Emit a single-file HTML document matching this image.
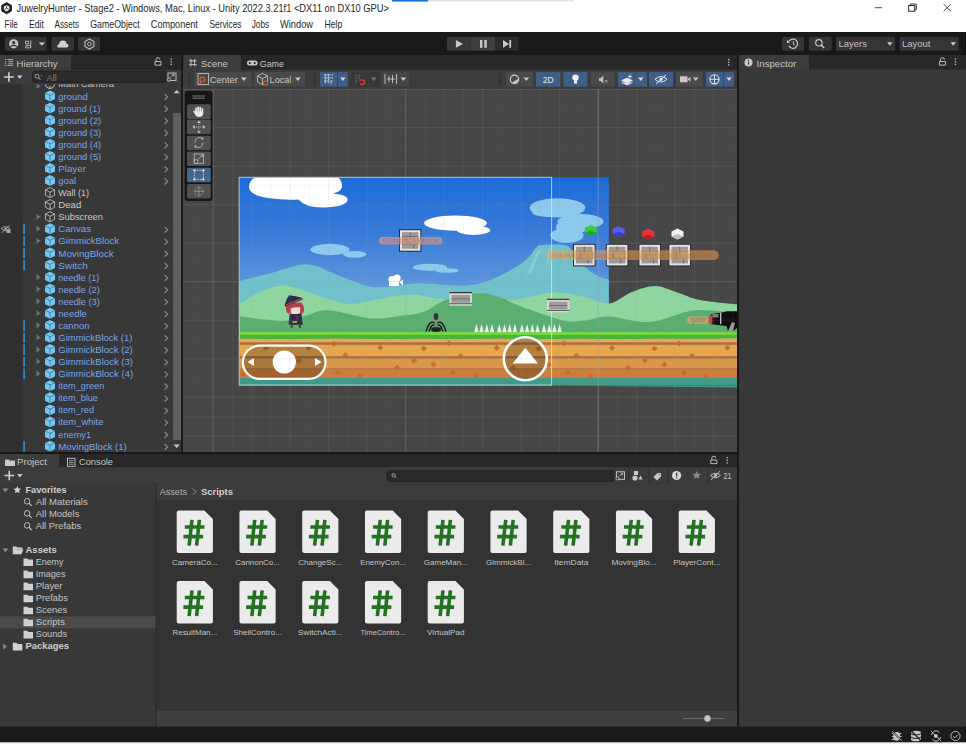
<!DOCTYPE html><html><head><meta charset="utf-8"><style>html,body{margin:0;padding:0;background:#383838;overflow:hidden}svg{display:block;font-family:"Liberation Sans",sans-serif}</style></head><body><svg width="966" height="744" viewBox="0 0 966 744">
<rect x="0" y="0" width="966" height="744" fill="#383838" />
<rect x="0" y="0" width="966" height="32" fill="#ffffff" />
<rect x="392" y="0" width="182" height="1.5" fill="#e3e3e3" />
<rect x="392" y="0" width="36" height="1.5" fill="#0a72d6" />
<path d="M6.6 2.6 L11.4 5.4 L11.4 11 L6.6 13.8 L1.8 11 L1.8 5.4 Z" fill="#1e1e1e" stroke="#1e1e1e" stroke-width="1" stroke-linejoin="round"/><path d="M6.6 5 L9.4 6.6 L9.4 9.8 L6.6 11.4 L3.8 9.8 L3.8 6.6 Z" fill="#e8e8e8"/><path d="M6.6 8.2 L6.6 5.6 M6.6 8.2 L4.4 9.5 M6.6 8.2 L8.8 9.5" stroke="#333" stroke-width="0.8"/>
<text x="16.5" y="12.4" font-size="10.2" fill="#262626" textLength="372.5" lengthAdjust="spacingAndGlyphs" >JuwelryHunter - Stage2 - Windows, Mac, Linux - Unity 2022.3.21f1 &lt;DX11 on DX10 GPU&gt;</text>
<rect x="874.8" y="7.3" width="7.4" height="0.9" fill="#333" />
<rect x="908.6" y="5.6" width="6.2" height="5.6" fill="none" stroke="#222" stroke-width="1"/><path d="M910.4 5.6 V4 H916.3 V9.6 H914.8" fill="none" stroke="#222" stroke-width="0.9"/>
<path d="M943.6 4 L951 11.4 M951 4 L943.6 11.4" stroke="#333" stroke-width="0.9"/>
<text x="4.6" y="27.8" font-size="10.2" fill="#262626" textLength="13.3" lengthAdjust="spacingAndGlyphs" >File</text>
<text x="29" y="27.8" font-size="10.2" fill="#262626" textLength="14.9" lengthAdjust="spacingAndGlyphs" >Edit</text>
<text x="54.6" y="27.8" font-size="10.2" fill="#262626" textLength="24.4" lengthAdjust="spacingAndGlyphs" >Assets</text>
<text x="90.2" y="27.8" font-size="10.2" fill="#262626" textLength="49.4" lengthAdjust="spacingAndGlyphs" >GameObject</text>
<text x="150.8" y="27.8" font-size="10.2" fill="#262626" textLength="47.1" lengthAdjust="spacingAndGlyphs" >Component</text>
<text x="209.4" y="27.8" font-size="10.2" fill="#262626" textLength="32.1" lengthAdjust="spacingAndGlyphs" >Services</text>
<text x="251.7" y="27.8" font-size="10.2" fill="#262626" textLength="17.5" lengthAdjust="spacingAndGlyphs" >Jobs</text>
<text x="280" y="27.8" font-size="10.2" fill="#262626" textLength="33" lengthAdjust="spacingAndGlyphs" >Window</text>
<text x="324.4" y="27.8" font-size="10.2" fill="#262626" textLength="18.0" lengthAdjust="spacingAndGlyphs" >Help</text>
<rect x="0" y="32" width="966" height="23" fill="#191919" />
<rect x="5" y="37" width="41.6" height="13.7" fill="#353535" rx="2"/>
<rect x="51.5" y="37" width="22.5" height="13.7" fill="#353535" rx="2"/>
<rect x="78" y="37" width="22" height="13.7" fill="#353535" rx="2"/>
<rect x="447" y="37" width="23.4" height="13.7" fill="#383838" />
<rect x="470.4" y="37" width="24.8" height="13.7" fill="#3e3e3e" />
<rect x="495.2" y="37" width="23.3" height="13.7" fill="#2c2c2c" />
<rect x="782" y="37" width="22" height="13.7" fill="#353535" rx="2"/>
<rect x="809" y="37" width="22.6" height="13.7" fill="#353535" rx="2"/>
<rect x="836" y="37" width="59" height="13.7" fill="#353535" rx="2"/>
<rect x="899.4" y="37" width="59.3" height="13.7" fill="#353535" rx="2"/>
<rect x="965" y="32" width="1" height="23" fill="#0c0c0c" />
<circle cx="13.7" cy="43.8" r="4.6" fill="#c8c8c8"/><circle cx="13.7" cy="42.6" r="1.6" fill="#353535"/><path d="M10.6 46.6 Q13.7 43.8 16.8 46.6" fill="none" stroke="#353535" stroke-width="1.3"/>
<path d="M25.5 41.2 h3.2 v2.6 h-3.2 z M30.8 40.5 v4.5 M25.8 45.6 h5 v2.3 h-5 z" fill="none" stroke="#c0c0c0" stroke-width="0.9"/>
<path d="M38.8 42.4 H45 L41.9 45.8 Z" fill="#c8c8c8"/>
<path d="M57.5 47.4 Q56.8 44.6 59.2 44 Q59.6 40.4 63.2 40.6 Q66 40.8 66.6 43.6 Q68.6 43.8 68.4 46 Q68.2 47.4 66.8 47.4 Z" fill="#d0d0d0"/>
<path d="M89.4 38.9 L93.9 41.5 L93.9 46.5 L89.4 49.1 L84.9 46.5 L84.9 41.5 Z" fill="none" stroke="#c0c0c0" stroke-width="1.1"/><circle cx="89.4" cy="44" r="1.8" fill="none" stroke="#c0c0c0" stroke-width="1"/>
<path d="M455.9 40 L463 43.9 L455.9 47.8 Z" fill="#c8c8c8"/>
<rect x="480" y="40" width="2.4" height="7.8" fill="#c8c8c8" />
<rect x="484.3" y="40" width="2.4" height="7.8" fill="#c8c8c8" />
<path d="M503 40 L509 43.9 L503 47.8 Z" fill="#c8c8c8"/>
<rect x="509.3" y="40" width="1.8" height="7.8" fill="#c8c8c8" />
<path d="M789.2 41.2 A4.6 4.6 0 1 1 788.9 45.8" fill="none" stroke="#c8c8c8" stroke-width="1.2"/><path d="M787.6 39.8 L789.8 42.8 L786.6 43 Z" fill="#c8c8c8"/><path d="M793.3 41.4 V44.2 L795.2 45.4" fill="none" stroke="#c8c8c8" stroke-width="1"/>
<circle cx="818.9" cy="42.8" r="3.2" fill="none" stroke="#c8c8c8" stroke-width="1.2"/><path d="M821.2 45.1 L824.2 48" stroke="#c8c8c8" stroke-width="1.5"/>
<text x="838.6" y="47.4" font-size="9.4" fill="#c0c0c0" textLength="28.4" lengthAdjust="spacingAndGlyphs" >Layers</text>
<path d="M887.2 42.2 H892.5 L889.85 45.8 Z" fill="#c8c8c8"/>
<text x="902" y="47.4" font-size="9.4" fill="#c0c0c0" textLength="28.5" lengthAdjust="spacingAndGlyphs" >Layout</text>
<path d="M950.4 42.2 H956 L953.2 45.8 Z" fill="#c8c8c8"/>
<rect x="0" y="55" width="181" height="15" fill="#282828" />
<rect x="0" y="55" width="71" height="15" fill="#3c3c3c" />
<rect x="183" y="55" width="554" height="15" fill="#282828" />
<rect x="183.4" y="55" width="57.5" height="15" fill="#3c3c3c" />
<rect x="739" y="55" width="227" height="14.5" fill="#282828" />
<rect x="739" y="55" width="70" height="14.5" fill="#3c3c3c" />
<rect x="181" y="55" width="2" height="397" fill="#191919" />
<rect x="737" y="55" width="2" height="672" fill="#191919" />
<rect x="183" y="70" width="554" height="18.8" fill="#3c3c3c" />
<rect x="183" y="88.8" width="554" height="363.2" fill="#474747" />
<rect x="0" y="70" width="181" height="14.2" fill="#3c3c3c" />
<rect x="0" y="84.2" width="181" height="368" fill="#383838" />
<rect x="0" y="84.2" width="22.4" height="368" fill="#303030" />
<path d="M35.3 71.2 H165.6 V82.6 H35.3 a3 3 0 0 1 -3 -3 V74.2 a3 3 0 0 1 3 -3 Z" fill="#2a2a2a" stroke="#202020" stroke-width="0.8"/>
<text x="16.6" y="66.6" font-size="9.4" fill="#c4c4c4" textLength="41" lengthAdjust="spacingAndGlyphs" >Hierarchy</text>
<text x="46.4" y="80.6" font-size="9.4" fill="#7a7a7a" >All</text>
<text x="201" y="66.75" font-size="9.4" fill="#c4c4c4" textLength="26.8" lengthAdjust="spacingAndGlyphs" >Scene</text>
<text x="259.7" y="66.75" font-size="9.4" fill="#c4c4c4" textLength="24.3" lengthAdjust="spacingAndGlyphs" >Game</text>
<text x="756.6" y="66.5" font-size="9.4" fill="#c4c4c4" textLength="39.7" lengthAdjust="spacingAndGlyphs" >Inspector</text>
<path d="M5 59.5 h1.2 M7.4 59.5 h5.8 M5 61.6 h1.2 M8.4 61.6 h4.8 M5 63.7 h1.2 M8.4 63.7 h4.8 M5 65.4 h1.2 M7.4 65.4 h5.8" stroke="#b8b8b8" stroke-width="0.9"/>
<path d="M191 59 v7.5 M194.6 59 v7.5 M189 60.8 h7.8 M189 64.6 h7.8" stroke="#c0c0c0" stroke-width="1"/>
<rect x="247" y="60.6" width="10.5" height="5" rx="2.5" fill="#c8c8c8"/><circle cx="249.8" cy="63.1" r="1.1" fill="#282828"/><circle cx="254.7" cy="63.1" r="1.1" fill="#282828"/>
<circle cx="748.5" cy="62.5" r="4" fill="#c8c8c8"/><rect x="748" y="61.6" width="1.1" height="3" fill="#3c3c3c"/><rect x="748" y="59.8" width="1.1" height="1.1" fill="#3c3c3c"/>
<path d="M155 61.5 h6 v3.6 h-6 z M156 61.5 v-1.8 a2 2 0 0 1 4 0" fill="none" stroke="#c8c8c8" stroke-width="0.9"/>
<rect x="170.6" y="58.5" width="1.3" height="1.3" fill="#c8c8c8" />
<rect x="170.6" y="61.1" width="1.3" height="1.3" fill="#c8c8c8" />
<rect x="170.6" y="63.7" width="1.3" height="1.3" fill="#c8c8c8" />
<path d="M939.5 61.5 h6 v3.6 h-6 z M940.5 61.5 v-1.8 a2 2 0 0 1 4 0" fill="none" stroke="#c8c8c8" stroke-width="0.9"/>
<rect x="954.8" y="58.5" width="1.3" height="1.3" fill="#c8c8c8" />
<rect x="954.8" y="61.1" width="1.3" height="1.3" fill="#c8c8c8" />
<rect x="954.8" y="63.7" width="1.3" height="1.3" fill="#c8c8c8" />
<path d="M4.1 77 h9.6 M8.9 72.2 v9.6" stroke="#d0d0d0" stroke-width="1.6"/>
<path d="M17 75.4 h5.4 l-2.7 3.5 z" fill="#c8c8c8"/>
<circle cx="37" cy="76.2" r="2" fill="none" stroke="#9a9a9a" stroke-width="1"/><path d="M38.5 77.6 l2 2" stroke="#9a9a9a" stroke-width="1.1"/><path d="M40.4 75.4 h2 l-1 1.2z" fill="#9a9a9a"/>
<rect x="168" y="73" width="8" height="7.5" fill="none" stroke="#c8c8c8" stroke-width="0.9"/><circle cx="169" cy="79.6" r="1.6" fill="#3c3c3c" stroke="#c8c8c8" stroke-width="0.8"/><path d="M171 77.4 l3-3 m-2 0 h2 v2" fill="none" stroke="#c8c8c8" stroke-width="0.8"/>
<rect x="194.8" y="72.1" width="56.9" height="14.5" fill="#4a4a4a" />
<rect x="254.2" y="72.1" width="50.8" height="14.5" fill="#4a4a4a" />
<rect x="198" y="73.5" width="10.5" height="11" fill="none" stroke="#bdbdbd" stroke-width="0.9"/><circle cx="202.4" cy="79.6" r="2.4" fill="none" stroke="#e0562c" stroke-width="1.2"/><path d="M201.6 81.8 l-1.6 2.2" stroke="#e0562c" stroke-width="1.1"/>
<text x="209.7" y="83" font-size="9.4" fill="#c4c4c4" textLength="28.3" lengthAdjust="spacingAndGlyphs" >Center</text>
<path d="M241 77.5 h5.7 l-2.85 3.6 z" fill="#c8c8c8"/>
<path d="M257.5 76 l5 -2.6 l5 2.6 v6 l-5 2.6 l-5 -2.6 z M257.5 76 l5 2.6 l5 -2.6 M262.5 78.6 v6" fill="none" stroke="#bdbdbd" stroke-width="0.9"/><circle cx="265.6" cy="83" r="2" fill="#4a4a4a" stroke="#e0562c" stroke-width="1.1"/>
<text x="269.6" y="83" font-size="9.4" fill="#c4c4c4" textLength="21.7" lengthAdjust="spacingAndGlyphs" >Local</text>
<path d="M295 77.5 h5.7 l-2.85 3.6 z" fill="#c8c8c8"/>
<path d="M188.5 73 v13 M190.5 73 v13" stroke="#2c2c2c" stroke-width="0.8"/>
<path d="M313.5 73 v13 M315.5 73 v13" stroke="#2c2c2c" stroke-width="0.8"/>
<rect x="320.1" y="72.1" width="17.2" height="14.5" fill="#3f5f88" />
<rect x="337.9" y="72.1" width="9.9" height="14.5" fill="#3f5f88" />
<path d="M324 75 h9 M324 78 h9 M324 81 h4 M325.5 74 v9 M328.5 74 v9 M329 79.5 l2 2.5 l2 -2.5 M331 82 v3" fill="none" stroke="#e8e8e8" stroke-width="0.9" stroke-dasharray="1 0.6"/>
<path d="M340.2 77.5 h5.5 l-2.75 3.5 z" fill="#d8d8d8"/>
<rect x="351.2" y="72.1" width="16.8" height="14.5" fill="#383838" />
<rect x="368.6" y="72.1" width="10.3" height="14.5" fill="#383838" />
<path d="M356 74.5 v9 M359 74.5 v6" stroke="#8a8a8a" stroke-width="0.9" stroke-dasharray="1 0.8"/><path d="M360 80 h2.5 a2.2 2.2 0 0 1 0 4.4 h-2.5" fill="none" stroke="#d84a30" stroke-width="1.1"/>
<path d="M371 77.5 h5.5 l-2.75 3.5 z" fill="#777"/>
<rect x="382" y="72.1" width="27" height="14.5" fill="#454545" />
<path d="M385 74 v10 M396.5 74 v10 M387 79 h8 M389 76 v6 M392.5 75 v8" fill="none" stroke="#c8c8c8" stroke-width="0.9"/>
<path d="M400.6 77.5 h5.6 l-2.8 3.5 z" fill="#c8c8c8"/>
<path d="M499.5 73 v13 M501.5 73 v13" stroke="#2c2c2c" stroke-width="0.8"/>
<rect x="506" y="72.1" width="27" height="14.5" fill="#4a4a4a" />
<circle cx="514.5" cy="79.3" r="4.2" fill="none" stroke="#d0d0d0" stroke-width="1.2"/><path d="M512.5 82.5 a3.6 3.6 0 0 0 5.5 -3.5" fill="#d0d0d0"/>
<path d="M523.5 77.5 h5.5 l-2.75 3.5 z" fill="#c8c8c8"/>
<rect x="536" y="72.1" width="24.4" height="14.5" fill="#3f5f88" />
<text x="548.2" y="82.6" font-size="9" fill="#e8e8e8" text-anchor="middle" textLength="11" lengthAdjust="spacingAndGlyphs" >2D</text>
<rect x="563.4" y="72.1" width="24.1" height="14.5" fill="#3f5f88" />
<circle cx="575.5" cy="77.6" r="3.2" fill="#f0f0f0"/><rect x="574" y="80.3" width="3" height="3.3" fill="#f0f0f0"/>
<rect x="590.7" y="72.1" width="24.1" height="14.5" fill="#4a4a4a" />
<path d="M599 78 h1.8 l2.5 -2.5 v8 l-2.5 -2.5 h-1.8 z" fill="#c0c0c0"/><path d="M605 80 l2.5 2.5 m0 -2.5 l-2.5 2.5" stroke="#c0c0c0" stroke-width="0.8"/>
<rect x="618" y="72.1" width="16" height="14.5" fill="#3f5f88" />
<rect x="634.5" y="72.1" width="12.5" height="14.5" fill="#3f5f88" />
<path d="M621.5 80.5 l5.5 -2.5 l5.5 2.5 l-5.5 2.5 z M621.5 82.5 l5.5 2.5 l5.5 -2.5" fill="#e8e8e8" stroke="#e8e8e8" stroke-width="0.6"/><path d="M630 74.5 v4 M628 76.5 h4" stroke="#e8e8e8" stroke-width="0.9"/>
<path d="M638 77.5 h5.5 l-2.75 3.5 z" fill="#d8d8d8"/>
<rect x="649" y="72.1" width="24" height="14.5" fill="#3f5f88" />
<path d="M655 79.3 q6 -5.5 12 0 q-6 5.5 -12 0 z" fill="none" stroke="#e8e8e8" stroke-width="1"/><circle cx="661" cy="79.3" r="1.6" fill="#e8e8e8"/><path d="M656 84 l10 -9" stroke="#e8e8e8" stroke-width="1"/>
<rect x="676" y="72.1" width="26.5" height="14.5" fill="#4a4a4a" />
<rect x="680" y="76.3" width="7.5" height="6" fill="#c8c8c8"/><path d="M687.5 79.3 l3 -2.5 v5 z" fill="#c8c8c8"/>
<path d="M693 77.5 h5.5 l-2.75 3.5 z" fill="#c8c8c8"/>
<rect x="706" y="72.1" width="17" height="14.5" fill="#3f5f88" />
<rect x="723.6" y="72.1" width="10.4" height="14.5" fill="#3f5f88" />
<circle cx="714.5" cy="79.3" r="4.6" fill="none" stroke="#e8e8e8" stroke-width="1.1"/><path d="M709.9 79.3 h9.2 M714.5 74.7 v9.2" stroke="#e8e8e8" stroke-width="0.9"/>
<path d="M726.3 77.5 h5.5 l-2.75 3.5 z" fill="#d8d8d8"/>
<rect x="728" y="59.0" width="1.3" height="1.3" fill="#c8c8c8" />
<rect x="728" y="61.6" width="1.3" height="1.3" fill="#c8c8c8" />
<rect x="728" y="64.2" width="1.3" height="1.3" fill="#c8c8c8" />
<text x="58.3" y="99.6" font-size="9.4" fill="#7ba3e3" textLength="29.4" lengthAdjust="spacingAndGlyphs" >ground</text>
<path d="M164.6 93.8 L167.6 96.9 L164.6 100.0" fill="none" stroke="#8a8a8a" stroke-width="1.2"/>
<path d="M50 90.6 L55 93.0 L55 99.0 L50 101.4 L45 99.0 L45 93.0 Z" fill="#72c8f2"/>
<path d="M45 93.0 L50 95.4 L55 93.0 M50 95.4 V101.4" fill="none" stroke="#3a6a88" stroke-width="0.7"/>
<text x="58.3" y="111.66999999999999" font-size="9.4" fill="#7ba3e3" textLength="42.2" lengthAdjust="spacingAndGlyphs" >ground (1)</text>
<path d="M164.6 105.86999999999999 L167.6 108.97 L164.6 112.07" fill="none" stroke="#8a8a8a" stroke-width="1.2"/>
<path d="M50 102.66999999999999 L55 105.07 L55 111.07 L50 113.47 L45 111.07 L45 105.07 Z" fill="#72c8f2"/>
<path d="M45 105.07 L50 107.47 L55 105.07 M50 107.47 V113.47" fill="none" stroke="#3a6a88" stroke-width="0.7"/>
<text x="58.3" y="123.74" font-size="9.4" fill="#7ba3e3" textLength="42.9" lengthAdjust="spacingAndGlyphs" >ground (2)</text>
<path d="M164.6 117.94 L167.6 121.04 L164.6 124.14" fill="none" stroke="#8a8a8a" stroke-width="1.2"/>
<path d="M50 114.74 L55 117.14 L55 123.14 L50 125.54 L45 123.14 L45 117.14 Z" fill="#72c8f2"/>
<path d="M45 117.14 L50 119.54 L55 117.14 M50 119.54 V125.54" fill="none" stroke="#3a6a88" stroke-width="0.7"/>
<text x="58.3" y="135.81" font-size="9.4" fill="#7ba3e3" textLength="42.9" lengthAdjust="spacingAndGlyphs" >ground (3)</text>
<path d="M164.6 130.01000000000002 L167.6 133.11 L164.6 136.21" fill="none" stroke="#8a8a8a" stroke-width="1.2"/>
<path d="M50 126.81 L55 129.21 L55 135.21 L50 137.61 L45 135.21 L45 129.21 Z" fill="#72c8f2"/>
<path d="M45 129.21 L50 131.61 L55 129.21 M50 131.61 V137.61" fill="none" stroke="#3a6a88" stroke-width="0.7"/>
<text x="58.3" y="147.88" font-size="9.4" fill="#7ba3e3" textLength="42.9" lengthAdjust="spacingAndGlyphs" >ground (4)</text>
<path d="M164.6 142.08 L167.6 145.18 L164.6 148.28" fill="none" stroke="#8a8a8a" stroke-width="1.2"/>
<path d="M50 138.88 L55 141.28 L55 147.28 L50 149.68 L45 147.28 L45 141.28 Z" fill="#72c8f2"/>
<path d="M45 141.28 L50 143.68 L55 141.28 M50 143.68 V149.68" fill="none" stroke="#3a6a88" stroke-width="0.7"/>
<text x="58.3" y="159.95" font-size="9.4" fill="#7ba3e3" textLength="42.9" lengthAdjust="spacingAndGlyphs" >ground (5)</text>
<path d="M164.6 154.15 L167.6 157.25 L164.6 160.35" fill="none" stroke="#8a8a8a" stroke-width="1.2"/>
<path d="M50 150.95 L55 153.35 L55 159.35 L50 161.75 L45 159.35 L45 153.35 Z" fill="#72c8f2"/>
<path d="M45 153.35 L50 155.75 L55 153.35 M50 155.75 V161.75" fill="none" stroke="#3a6a88" stroke-width="0.7"/>
<text x="58.3" y="172.02" font-size="9.4" fill="#7ba3e3" textLength="27.6" lengthAdjust="spacingAndGlyphs" >Player</text>
<path d="M164.6 166.22000000000003 L167.6 169.32000000000002 L164.6 172.42000000000002" fill="none" stroke="#8a8a8a" stroke-width="1.2"/>
<path d="M50 163.02 L55 165.42000000000002 L55 171.42000000000002 L50 173.82000000000002 L45 171.42000000000002 L45 165.42000000000002 Z" fill="#72c8f2"/>
<path d="M45 165.42000000000002 L50 167.82000000000002 L55 165.42000000000002 M50 167.82000000000002 V173.82000000000002" fill="none" stroke="#3a6a88" stroke-width="0.7"/>
<text x="58.3" y="184.09" font-size="9.4" fill="#7ba3e3" textLength="17.9" lengthAdjust="spacingAndGlyphs" >goal</text>
<path d="M164.6 178.29000000000002 L167.6 181.39000000000001 L164.6 184.49" fill="none" stroke="#8a8a8a" stroke-width="1.2"/>
<path d="M50 175.09 L55 177.49 L55 183.49 L50 185.89000000000001 L45 183.49 L45 177.49 Z" fill="#72c8f2"/>
<path d="M45 177.49 L50 179.89000000000001 L55 177.49 M50 179.89000000000001 V185.89000000000001" fill="none" stroke="#3a6a88" stroke-width="0.7"/>
<text x="58.3" y="196.16" font-size="9.4" fill="#c8c8c8" textLength="30.7" lengthAdjust="spacingAndGlyphs" >Wall (1)</text>
<path d="M50 187.56 L54.6 189.86 L54.6 195.26 L50 197.56 L45.4 195.26 L45.4 189.86 Z M45.4 189.86 L50 192.16 L54.6 189.86 M50 192.16 V197.56" fill="none" stroke="#c8c8c8" stroke-width="0.8"/>
<text x="58.3" y="208.23" font-size="9.4" fill="#c8c8c8" textLength="23" lengthAdjust="spacingAndGlyphs" >Dead</text>
<path d="M50 199.63 L54.6 201.93 L54.6 207.32999999999998 L50 209.63 L45.4 207.32999999999998 L45.4 201.93 Z M45.4 201.93 L50 204.23 L54.6 201.93 M50 204.23 V209.63" fill="none" stroke="#c8c8c8" stroke-width="0.8"/>
<text x="58.3" y="220.29999999999998" font-size="9.4" fill="#c8c8c8" textLength="44.7" lengthAdjust="spacingAndGlyphs" >Subscreen</text>
<path d="M36.5 213.7 L40.5 216.7 L36.5 219.7 Z" fill="#707070"/>
<path d="M50 211.7 L54.6 214.0 L54.6 219.39999999999998 L50 221.7 L45.4 219.39999999999998 L45.4 214.0 Z M45.4 214.0 L50 216.29999999999998 L54.6 214.0 M50 216.29999999999998 V221.7" fill="none" stroke="#c8c8c8" stroke-width="0.8"/>
<text x="58.3" y="232.37" font-size="9.4" fill="#7ba3e3" textLength="32.7" lengthAdjust="spacingAndGlyphs" >Canvas</text>
<rect x="23.3" y="223.77" width="1.6" height="10.5" fill="#2f8fd0" />
<path d="M36.5 225.77 L40.5 228.77 L36.5 231.77 Z" fill="#707070"/>
<path d="M164.6 226.57000000000002 L167.6 229.67000000000002 L164.6 232.77" fill="none" stroke="#8a8a8a" stroke-width="1.2"/>
<path d="M50 223.37 L55 225.77 L55 231.77 L50 234.17000000000002 L45 231.77 L45 225.77 Z" fill="#72c8f2"/>
<path d="M45 225.77 L50 228.17000000000002 L55 225.77 M50 228.17000000000002 V234.17000000000002" fill="none" stroke="#3a6a88" stroke-width="0.7"/>
<text x="58.3" y="244.44" font-size="9.4" fill="#7ba3e3" textLength="60.8" lengthAdjust="spacingAndGlyphs" >GimmickBlock</text>
<rect x="23.3" y="235.84" width="1.6" height="10.5" fill="#2f8fd0" />
<path d="M36.5 237.84 L40.5 240.84 L36.5 243.84 Z" fill="#707070"/>
<path d="M164.6 238.64000000000001 L167.6 241.74 L164.6 244.84" fill="none" stroke="#8a8a8a" stroke-width="1.2"/>
<path d="M50 235.44 L55 237.84 L55 243.84 L50 246.24 L45 243.84 L45 237.84 Z" fill="#72c8f2"/>
<path d="M45 237.84 L50 240.24 L55 237.84 M50 240.24 V246.24" fill="none" stroke="#3a6a88" stroke-width="0.7"/>
<text x="58.3" y="256.51" font-size="9.4" fill="#7ba3e3" textLength="55.4" lengthAdjust="spacingAndGlyphs" >MovingBlock</text>
<rect x="23.3" y="247.91" width="1.6" height="10.5" fill="#2f8fd0" />
<path d="M164.6 250.71 L167.6 253.81 L164.6 256.90999999999997" fill="none" stroke="#8a8a8a" stroke-width="1.2"/>
<path d="M50 247.51 L55 249.91 L55 255.91 L50 258.31 L45 255.91 L45 249.91 Z" fill="#72c8f2"/>
<path d="M45 249.91 L50 252.31 L55 249.91 M50 252.31 V258.31" fill="none" stroke="#3a6a88" stroke-width="0.7"/>
<text x="58.3" y="268.58000000000004" font-size="9.4" fill="#7ba3e3" textLength="29.4" lengthAdjust="spacingAndGlyphs" >Switch</text>
<rect x="23.3" y="259.98" width="1.6" height="10.5" fill="#2f8fd0" />
<path d="M164.6 262.78000000000003 L167.6 265.88 L164.6 268.98" fill="none" stroke="#8a8a8a" stroke-width="1.2"/>
<path d="M50 259.58000000000004 L55 261.98 L55 267.98 L50 270.38 L45 267.98 L45 261.98 Z" fill="#72c8f2"/>
<path d="M45 261.98 L50 264.38 L55 261.98 M50 264.38 V270.38" fill="none" stroke="#3a6a88" stroke-width="0.7"/>
<text x="58.3" y="280.65000000000003" font-size="9.4" fill="#7ba3e3" textLength="41" lengthAdjust="spacingAndGlyphs" >needle (1)</text>
<path d="M36.5 274.05 L40.5 277.05 L36.5 280.05 Z" fill="#707070"/>
<path d="M164.6 274.85 L167.6 277.95 L164.6 281.05" fill="none" stroke="#8a8a8a" stroke-width="1.2"/>
<path d="M50 271.65000000000003 L55 274.05 L55 280.05 L50 282.45 L45 280.05 L45 274.05 Z" fill="#72c8f2"/>
<path d="M45 274.05 L50 276.45 L55 274.05 M50 276.45 V282.45" fill="none" stroke="#3a6a88" stroke-width="0.7"/>
<text x="58.3" y="292.72" font-size="9.4" fill="#7ba3e3" textLength="41.5" lengthAdjust="spacingAndGlyphs" >needle (2)</text>
<path d="M36.5 286.12 L40.5 289.12 L36.5 292.12 Z" fill="#707070"/>
<path d="M164.6 286.92 L167.6 290.02 L164.6 293.12" fill="none" stroke="#8a8a8a" stroke-width="1.2"/>
<path d="M50 283.72 L55 286.12 L55 292.12 L50 294.52 L45 292.12 L45 286.12 Z" fill="#72c8f2"/>
<path d="M45 286.12 L50 288.52 L55 286.12 M50 288.52 V294.52" fill="none" stroke="#3a6a88" stroke-width="0.7"/>
<text x="58.3" y="304.79" font-size="9.4" fill="#7ba3e3" textLength="41.5" lengthAdjust="spacingAndGlyphs" >needle (3)</text>
<path d="M36.5 298.19 L40.5 301.19 L36.5 304.19 Z" fill="#707070"/>
<path d="M164.6 298.99 L167.6 302.09 L164.6 305.19" fill="none" stroke="#8a8a8a" stroke-width="1.2"/>
<path d="M50 295.79 L55 298.19 L55 304.19 L50 306.59 L45 304.19 L45 298.19 Z" fill="#72c8f2"/>
<path d="M45 298.19 L50 300.59 L55 298.19 M50 300.59 V306.59" fill="none" stroke="#3a6a88" stroke-width="0.7"/>
<text x="58.3" y="316.86" font-size="9.4" fill="#7ba3e3" textLength="28.6" lengthAdjust="spacingAndGlyphs" >needle</text>
<path d="M36.5 310.26 L40.5 313.26 L36.5 316.26 Z" fill="#707070"/>
<path d="M164.6 311.06 L167.6 314.15999999999997 L164.6 317.26" fill="none" stroke="#8a8a8a" stroke-width="1.2"/>
<path d="M50 307.86 L55 310.26 L55 316.26 L50 318.65999999999997 L45 316.26 L45 310.26 Z" fill="#72c8f2"/>
<path d="M45 310.26 L50 312.65999999999997 L55 310.26 M50 312.65999999999997 V318.65999999999997" fill="none" stroke="#3a6a88" stroke-width="0.7"/>
<text x="58.3" y="328.93000000000006" font-size="9.4" fill="#7ba3e3" textLength="31.2" lengthAdjust="spacingAndGlyphs" >cannon</text>
<rect x="23.3" y="320.33000000000004" width="1.6" height="10.5" fill="#2f8fd0" />
<path d="M36.5 322.33000000000004 L40.5 325.33000000000004 L36.5 328.33000000000004 Z" fill="#707070"/>
<path d="M164.6 323.13000000000005 L167.6 326.23 L164.6 329.33000000000004" fill="none" stroke="#8a8a8a" stroke-width="1.2"/>
<path d="M50 319.93000000000006 L55 322.33000000000004 L55 328.33000000000004 L50 330.73 L45 328.33000000000004 L45 322.33000000000004 Z" fill="#72c8f2"/>
<path d="M45 322.33000000000004 L50 324.73 L55 322.33000000000004 M50 324.73 V330.73" fill="none" stroke="#3a6a88" stroke-width="0.7"/>
<text x="58.3" y="341.0" font-size="9.4" fill="#7ba3e3" textLength="74.1" lengthAdjust="spacingAndGlyphs" >GimmickBlock (1)</text>
<rect x="23.3" y="332.4" width="1.6" height="10.5" fill="#2f8fd0" />
<path d="M36.5 334.4 L40.5 337.4 L36.5 340.4 Z" fill="#707070"/>
<path d="M164.6 335.2 L167.6 338.29999999999995 L164.6 341.4" fill="none" stroke="#8a8a8a" stroke-width="1.2"/>
<path d="M50 332.0 L55 334.4 L55 340.4 L50 342.79999999999995 L45 340.4 L45 334.4 Z" fill="#72c8f2"/>
<path d="M45 334.4 L50 336.79999999999995 L55 334.4 M50 336.79999999999995 V342.79999999999995" fill="none" stroke="#3a6a88" stroke-width="0.7"/>
<text x="58.3" y="353.07000000000005" font-size="9.4" fill="#7ba3e3" textLength="74.5" lengthAdjust="spacingAndGlyphs" >GimmickBlock (2)</text>
<rect x="23.3" y="344.47" width="1.6" height="10.5" fill="#2f8fd0" />
<path d="M36.5 346.47 L40.5 349.47 L36.5 352.47 Z" fill="#707070"/>
<path d="M164.6 347.27000000000004 L167.6 350.37 L164.6 353.47" fill="none" stroke="#8a8a8a" stroke-width="1.2"/>
<path d="M50 344.07000000000005 L55 346.47 L55 352.47 L50 354.87 L45 352.47 L45 346.47 Z" fill="#72c8f2"/>
<path d="M45 346.47 L50 348.87 L55 346.47 M50 348.87 V354.87" fill="none" stroke="#3a6a88" stroke-width="0.7"/>
<text x="58.3" y="365.14000000000004" font-size="9.4" fill="#7ba3e3" textLength="74.7" lengthAdjust="spacingAndGlyphs" >GimmickBlock (3)</text>
<rect x="23.3" y="356.54" width="1.6" height="10.5" fill="#2f8fd0" />
<path d="M36.5 358.54 L40.5 361.54 L36.5 364.54 Z" fill="#707070"/>
<path d="M164.6 359.34000000000003 L167.6 362.44 L164.6 365.54" fill="none" stroke="#8a8a8a" stroke-width="1.2"/>
<path d="M50 356.14000000000004 L55 358.54 L55 364.54 L50 366.94 L45 364.54 L45 358.54 Z" fill="#72c8f2"/>
<path d="M45 358.54 L50 360.94 L55 358.54 M50 360.94 V366.94" fill="none" stroke="#3a6a88" stroke-width="0.7"/>
<text x="58.3" y="377.21000000000004" font-size="9.4" fill="#7ba3e3" textLength="74.9" lengthAdjust="spacingAndGlyphs" >GimmickBlock (4)</text>
<rect x="23.3" y="368.61" width="1.6" height="10.5" fill="#2f8fd0" />
<path d="M36.5 370.61 L40.5 373.61 L36.5 376.61 Z" fill="#707070"/>
<path d="M164.6 371.41 L167.6 374.51 L164.6 377.61" fill="none" stroke="#8a8a8a" stroke-width="1.2"/>
<path d="M50 368.21000000000004 L55 370.61 L55 376.61 L50 379.01 L45 376.61 L45 370.61 Z" fill="#72c8f2"/>
<path d="M45 370.61 L50 373.01 L55 370.61 M50 373.01 V379.01" fill="none" stroke="#3a6a88" stroke-width="0.7"/>
<text x="58.3" y="389.28000000000003" font-size="9.4" fill="#7ba3e3" textLength="46" lengthAdjust="spacingAndGlyphs" >item_green</text>
<path d="M164.6 383.48 L167.6 386.58 L164.6 389.68" fill="none" stroke="#8a8a8a" stroke-width="1.2"/>
<path d="M50 380.28000000000003 L55 382.68 L55 388.68 L50 391.08 L45 388.68 L45 382.68 Z" fill="#72c8f2"/>
<path d="M45 382.68 L50 385.08 L55 382.68 M50 385.08 V391.08" fill="none" stroke="#3a6a88" stroke-width="0.7"/>
<text x="58.3" y="401.35" font-size="9.4" fill="#7ba3e3" textLength="39.6" lengthAdjust="spacingAndGlyphs" >item_blue</text>
<path d="M164.6 395.55 L167.6 398.65 L164.6 401.75" fill="none" stroke="#8a8a8a" stroke-width="1.2"/>
<path d="M50 392.35 L55 394.75 L55 400.75 L50 403.15 L45 400.75 L45 394.75 Z" fill="#72c8f2"/>
<path d="M45 394.75 L50 397.15 L55 394.75 M50 397.15 V403.15" fill="none" stroke="#3a6a88" stroke-width="0.7"/>
<text x="58.3" y="413.42" font-size="9.4" fill="#7ba3e3" textLength="35.7" lengthAdjust="spacingAndGlyphs" >item_red</text>
<path d="M164.6 407.62 L167.6 410.71999999999997 L164.6 413.82" fill="none" stroke="#8a8a8a" stroke-width="1.2"/>
<path d="M50 404.42 L55 406.82 L55 412.82 L50 415.21999999999997 L45 412.82 L45 406.82 Z" fill="#72c8f2"/>
<path d="M45 406.82 L50 409.21999999999997 L55 406.82 M50 409.21999999999997 V415.21999999999997" fill="none" stroke="#3a6a88" stroke-width="0.7"/>
<text x="58.3" y="425.49" font-size="9.4" fill="#7ba3e3" textLength="45.2" lengthAdjust="spacingAndGlyphs" >item_white</text>
<path d="M164.6 419.69 L167.6 422.78999999999996 L164.6 425.89" fill="none" stroke="#8a8a8a" stroke-width="1.2"/>
<path d="M50 416.49 L55 418.89 L55 424.89 L50 427.28999999999996 L45 424.89 L45 418.89 Z" fill="#72c8f2"/>
<path d="M45 418.89 L50 421.28999999999996 L55 418.89 M50 421.28999999999996 V427.28999999999996" fill="none" stroke="#3a6a88" stroke-width="0.7"/>
<text x="58.3" y="437.56000000000006" font-size="9.4" fill="#7ba3e3" textLength="32.7" lengthAdjust="spacingAndGlyphs" >enemy1</text>
<path d="M164.6 431.76000000000005 L167.6 434.86 L164.6 437.96000000000004" fill="none" stroke="#8a8a8a" stroke-width="1.2"/>
<path d="M50 428.56000000000006 L55 430.96000000000004 L55 436.96000000000004 L50 439.36 L45 436.96000000000004 L45 430.96000000000004 Z" fill="#72c8f2"/>
<path d="M45 430.96000000000004 L50 433.36 L55 430.96000000000004 M50 433.36 V439.36" fill="none" stroke="#3a6a88" stroke-width="0.7"/>
<text x="58.3" y="449.63000000000005" font-size="9.4" fill="#7ba3e3" textLength="68.5" lengthAdjust="spacingAndGlyphs" >MovingBlock (1)</text>
<rect x="23.3" y="441.03000000000003" width="1.6" height="10.5" fill="#2f8fd0" />
<path d="M164.6 443.83000000000004 L167.6 446.93 L164.6 450.03000000000003" fill="none" stroke="#8a8a8a" stroke-width="1.2"/>
<path d="M50 440.63000000000005 L55 443.03000000000003 L55 449.03000000000003 L50 451.43 L45 449.03000000000003 L45 443.03000000000003 Z" fill="#72c8f2"/>
<path d="M45 443.03000000000003 L50 445.43 L55 443.03000000000003 M50 445.43 V451.43" fill="none" stroke="#3a6a88" stroke-width="0.7"/>
<clipPath id="hl"><rect x="0" y="84.2" width="172" height="368"/></clipPath><g clip-path="url(#hl)">
<text x="58.3" y="86.9" font-size="9.4" fill="#c8c8c8" textLength="55.7" lengthAdjust="spacingAndGlyphs" >Main Camera</text>
<path d="M45.5 84 a4.5 4.5 0 0 0 9 0" fill="none" stroke="#c8c8c8" stroke-width="1"/><path d="M50 86 v2.5" stroke="#c8c8c8" stroke-width="1"/><path d="M36.5 83 L40.5 86 L36.5 89Z" fill="#707070"/>
</g>
<path d="M1 228.7 q4.5 -4 9 0 q-4.5 4 -9 0 z" fill="none" stroke="#aaaaaa" stroke-width="0.9"/><circle cx="5.5" cy="228.7" r="1.3" fill="#aaaaaa"/><path d="M1.5 233 l8 -8" stroke="#aaaaaa" stroke-width="0.9"/><rect x="6.5" y="229.5" width="4" height="3.5" fill="#aaaaaa"/>
<rect x="172.5" y="84.2" width="8.5" height="368" fill="#383838" />
<rect x="173" y="113" width="8" height="327" fill="#5e5e5e" />
<path d="M173.6 93.3 h6.2 l-3.1 -3.4 z M173.6 444.6 h6.2 l-3.1 3.4 z" fill="#c8c8c8"/>
<defs><linearGradient id="sky" x1="0" y1="0" x2="0" y2="1"><stop offset="0" stop-color="#1b6bd8"/><stop offset="0.45" stop-color="#3a7cd8"/><stop offset="1" stop-color="#6a9fdc"/></linearGradient><clipPath id="scv"><rect x="183" y="88.8" width="554" height="363.2"/></clipPath></defs>
<g clip-path="url(#scv)">
<rect x="239.5" y="177.4" width="369.3" height="128" fill="url(#sky)" />
<clipPath id="skyc"><rect x="239.5" y="177.4" width="369.3" height="128"/></clipPath>
<g clip-path="url(#skyc)">
<path d="M255 177.4 L338 177.4 Q343 181 341.8 188 Q340 192 333 193.5 Q348 195 347.6 200 Q346 207 323 207.5 Q305 207.5 298.5 199.5 Q285 200.5 268 198 Q249 195 249 187 Q249.5 180 255 177.4 Z" fill="#ffffff"/>
<g fill="#ffffff"><ellipse cx="455.5" cy="223.1" rx="31.5" ry="7.6"/><ellipse cx="473.6" cy="230.3" rx="16.6" ry="4.7"/></g>
<g fill="#8cc9ef"><ellipse cx="330" cy="249.5" rx="19.5" ry="5.8"/><ellipse cx="354.7" cy="254.4" rx="11.7" ry="3.4"/></g>
<g fill="#8cc9ef"><ellipse cx="430" cy="267.3" rx="17.2" ry="3.6"/><ellipse cx="447" cy="270.5" rx="11.7" ry="2.3"/></g>
<g fill="#8cc9ef"><ellipse cx="557.5" cy="207.8" rx="27.9" ry="9.6"/><ellipse cx="580.5" cy="221.5" rx="23" ry="7.6"/><ellipse cx="567" cy="235.3" rx="16.5" ry="7.6"/><ellipse cx="572" cy="227" rx="16" ry="7"/><ellipse cx="548" cy="212" rx="16" ry="5"/></g>
</g>
<path d="M239.5 281 C245.4 279.5 263.5 274.8 275 272 C286.5 269.2 297.7 263.7 308.5 264.4 C319.3 265.1 329.4 272.2 340 276 C350.6 279.8 362.0 285.5 372 287 C382.0 288.5 391.5 285.4 400 284.8 C408.5 284.2 413.7 283.1 423 283.2 C432.3 283.3 447.3 285.5 456 285.7 C464.7 285.9 469.1 285.5 475 284.5 C480.9 283.5 485.3 282.1 491.7 279.5 C498.1 276.9 507.4 272.2 513.5 268.6 C519.5 265.0 524.1 261.3 528 257.7 C531.9 254.1 534.3 249.1 536.7 247 C539.1 244.9 537.9 245.3 542.5 245 C547.1 244.7 559.4 244.2 564.2 245 C569.0 245.8 568.3 246.5 571.4 249.8 C574.5 253.1 578.6 260.6 583 265 C587.4 269.4 593.2 273.5 597.5 275.9 C601.8 278.3 606.9 278.9 608.8 279.5 L608.8 306 L239.5 306 Z" fill="#70c1cc"/>
<path d="M537 252 l5 -4 l-12 27 l-3 -2 z M548 249 l4 1 l-6 20 z M560 250 l4 2 l2 14 z" fill="#8ad3dd" opacity="0.7"/>
<path d="M239.5 304 C242.9 302.0 252.9 295.1 260 292 C267.1 288.9 275.3 285.8 282 285.4 C288.7 285.0 292.8 287.4 300 289.5 C307.2 291.6 316.7 295.6 325 298 C333.3 300.4 341.7 303.7 350 304 C358.3 304.3 365.1 301.6 375 300 C384.9 298.4 398.2 294.7 409.5 294.5 C420.8 294.3 430.9 298.1 442.6 299 C454.4 299.9 468.2 299.9 480 300 C491.8 300.1 501.2 301.1 513.5 299.8 C525.8 298.6 542.1 293.0 554 292.5 C565.9 292.0 575.8 295.2 585 297 C594.2 298.8 601.2 304.3 609 303.5 C616.8 302.7 624.3 294.9 632 292 C639.7 289.1 647.7 286.0 655 286 C662.3 286.0 668.5 289.7 676 292 C683.5 294.3 689.8 297.9 700 300 C710.2 302.1 730.8 303.6 737 304.3 L737 340 L239.5 340 Z" fill="#8ed5a0"/>
<path d="M239.5 316.3 C243.2 316.8 254.2 318.6 262 319.3 C269.8 320.1 278.8 321.4 286 320.8 C293.2 320.2 298.2 317.8 305 316 C311.8 314.2 317.2 310.0 327 310.2 C336.8 310.4 355.1 316.0 364 317.4 C372.9 318.8 374.7 318.6 380.7 318.4 C386.7 318.1 392.9 316.9 400 315.9 C407.1 314.9 415.3 314.8 423 312.2 C430.7 309.6 436.7 303.2 446 300 C455.3 296.8 470.2 293.7 479 293.2 C487.8 292.7 492.2 294.9 499 297 C505.8 299.1 509.3 302.1 520 306 C530.7 309.9 552.2 318.0 563 320.4 C573.8 322.8 577.3 321.1 585 320.5 C592.7 319.9 598.2 316.2 609 316.5 C619.8 316.8 635.7 323.0 650 322 C664.3 321.0 680.5 311.7 695 310.3 C709.5 308.9 730.0 313.0 737 313.5 L737 340 L239.5 340 Z" fill="#5aae6f"/>
<rect x="239.5" y="338.5" width="497.5" height="4.2" fill="#e6a955" />
<rect x="239.5" y="342.6" width="497.5" height="2" fill="#c9672c" />
<rect x="239.5" y="344.6" width="497.5" height="12" fill="#e6a74f" />
<rect x="239.5" y="356.6" width="497.5" height="1.8" fill="#c9672c" />
<rect x="239.5" y="358.3" width="497.5" height="10.4" fill="#db9849" />
<rect x="239.5" y="368.7" width="497.5" height="9.3" fill="#cd7e3d" />
<rect x="239.5" y="378" width="497.5" height="7.5" fill="#3f9b88" />
<path d="M551.7 385.5 L737 385.5 L737 387.5 Q640 386.5 551.7 385.5 Z" fill="#3f9b88"/>
<path d="M239.5 332 H737 V337.5 Q700 339.5 660 338.2 Q620 339.8 580 338.4 Q540 339.6 500 338.2 Q460 339.6 420 338.4 Q380 339.8 340 338.3 Q290 339.6 239.5 338.4 Z" fill="#4bb53b"/>
<path d="M239.5 332 H737 V334.8 Q700 335.4 660 334.8 Q620 335.4 580 334.8 Q540 335.4 500 334.8 Q460 335.4 420 334.8 Q380 335.4 340 334.8 Q290 335.4 239.5 334.8 Z" fill="#74d747"/>
<g fill="#c26c30" fill-opacity="0.9"><path d="M266 344.5 L269.1 347.6 L266 350.70000000000005 L262.9 347.6 Z"/><path d="M308.4 344.5 L311.5 347.6 L308.4 350.70000000000005 L305.29999999999995 347.6 Z"/><path d="M298.8 357.5 L301.90000000000003 360.6 L298.8 363.70000000000005 L295.7 360.6 Z"/><path d="M243 371.7 L246.1 374.8 L243 377.90000000000003 L239.9 374.8 Z"/><path d="M333.8 340.7 L336.90000000000003 343.8 L333.8 346.90000000000003 L330.7 343.8 Z"/><path d="M345.4 352.29999999999995 L348.5 355.4 L345.4 358.5 L342.29999999999995 355.4 Z"/><path d="M337.6 369.09999999999997 L340.70000000000005 372.2 L337.6 375.3 L334.5 372.2 Z"/><path d="M359.6 372.9 L362.70000000000005 376 L359.6 379.1 L356.5 376 Z"/><path d="M380.3 344.5 L383.40000000000003 347.6 L380.3 350.70000000000005 L377.2 347.6 Z"/><path d="M397.2 364.5 L400.3 367.6 L397.2 370.70000000000005 L394.09999999999997 367.6 Z"/><path d="M414 357.5 L417.1 360.6 L414 363.70000000000005 L410.9 360.6 Z"/><path d="M423.8 345.29999999999995 L426.90000000000003 348.4 L423.8 351.5 L420.7 348.4 Z"/><path d="M433.4 361.4 L436.5 364.5 L433.4 367.6 L430.29999999999995 364.5 Z"/><path d="M449 340.09999999999997 L452.1 343.2 L449 346.3 L445.9 343.2 Z"/><path d="M452.8 369.09999999999997 L455.90000000000003 372.2 L452.8 375.3 L449.7 372.2 Z"/><path d="M460.6 353.09999999999997 L463.70000000000005 356.2 L460.6 359.3 L457.5 356.2 Z"/><path d="M475.6 372.9 L478.70000000000005 376 L475.6 379.1 L472.5 376 Z"/><path d="M496.7 344.7 L499.8 347.8 L496.7 350.90000000000003 L493.59999999999997 347.8 Z"/><path d="M538.7 345.59999999999997 L541.8000000000001 348.7 L538.7 351.8 L535.6 348.7 Z"/><path d="M563.8 340.5 L566.9 343.6 L563.8 346.70000000000005 L560.6999999999999 343.6 Z"/><path d="M576.4 352.7 L579.5 355.8 L576.4 358.90000000000003 L573.3 355.8 Z"/><path d="M548.8 361.5 L551.9 364.6 L548.8 367.70000000000005 L545.6999999999999 364.6 Z"/><path d="M513.3 364.7 L516.4 367.8 L513.3 370.90000000000003 L510.19999999999993 367.8 Z"/><path d="M567.7 369.4 L570.8000000000001 372.5 L567.7 375.6 L564.6 372.5 Z"/><path d="M590.9 373.29999999999995 L594.0 376.4 L590.9 379.5 L587.8 376.4 Z"/><path d="M612 344.79999999999995 L615.1 347.9 L612 351.0 L608.9 347.9 Z"/><path d="M654.5 345.4 L657.6 348.5 L654.5 351.6 L651.4 348.5 Z"/><path d="M679.4 340.4 L682.5 343.5 L679.4 346.6 L676.3 343.5 Z"/><path d="M727.4 344.59999999999997 L730.5 347.7 L727.4 350.8 L724.3 347.7 Z"/><path d="M692 352.9 L695.1 356 L692 359.1 L688.9 356 Z"/><path d="M644.8 357.2 L647.9 360.3 L644.8 363.40000000000003 L641.6999999999999 360.3 Z"/><path d="M664.5 361.4 L667.6 364.5 L664.5 367.6 L661.4 364.5 Z"/><path d="M628.2 364.9 L631.3000000000001 368 L628.2 371.1 L625.1 368 Z"/><path d="M683.9 369.5 L687.0 372.6 L683.9 375.70000000000005 L680.8 372.6 Z"/><path d="M706.5 373.4 L709.6 376.5 L706.5 379.6 L703.4 376.5 Z"/></g>
<rect x="239.2" y="177.3" width="312.4" height="207.8" fill="none" stroke="#d8eef5" stroke-opacity="0.75" stroke-width="1"/>
<rect x="399" y="229.2" width="22.4" height="22.5" fill="#2a2a2a"/><rect x="400" y="230.2" width="20.4" height="20.5" fill="#e4e4e4"/><rect x="402" y="232.2" width="16.4" height="16.5" fill="#9a9a9a"/><path d="M402 236.7 h16.4 M402 244.2 h16.4 M410.2 232.2 v7.5 M406.46666666666664 236.7 v7.5 M413.93333333333334 244.2 v4.5" stroke="#5a5a5a" stroke-width="0.8"/>
<rect x="378.7" y="237" width="63.8" height="7.5" rx="3.75" fill="#ec9a86" fill-opacity="0.6"/>
<text x="410.6" y="243.3" font-size="7" fill="#7a4a4a" fill-opacity="0.35" text-anchor="middle" textLength="56" lengthAdjust="spacingAndGlyphs">GimmickBlock</text>
<g fill="#ffffff"><circle cx="392" cy="279.5" r="3.6"/><circle cx="397" cy="278" r="3.6"/><rect x="389" y="280" width="10" height="6"/><path d="M399 282 l4 -2.5 v6 z"/></g>
<rect x="449.4" y="292" width="22.6" height="13.7" fill="#d8d8d8"/><rect x="449.4" y="292" width="22.6" height="1.2" fill="#333"/><rect x="451.4" y="295" width="18.6" height="7.699999999999999" fill="#9c9c9c"/><path d="M451.4 298.85 h18.6" stroke="#666" stroke-width="0.8"/><rect x="449.4" y="303.2" width="22.6" height="1" fill="#555"/>
<rect x="547" y="298.7" width="22.4" height="13.7" fill="#d8d8d8"/><rect x="547" y="298.7" width="22.4" height="1.2" fill="#333"/><rect x="549" y="301.7" width="18.4" height="7.699999999999999" fill="#9c9c9c"/><path d="M549 305.55 h18.4" stroke="#666" stroke-width="0.8"/><rect x="547" y="309.9" width="22.4" height="1" fill="#555"/>
<g fill="none" stroke="#111" stroke-width="1.3"><path d="M426 331.5 Q430 318 436 324 Q442 318 446 331.5"/><path d="M429 331.5 Q432 322 436 326 Q440 322 443 331.5"/></g><rect x="434.6" y="320" width="2.8" height="8" fill="#888"/><rect x="433.8" y="313" width="4.4" height="7" rx="2" fill="#333"/><ellipse cx="436" cy="329.5" rx="5" ry="2.5" fill="#222"/>
<g fill="#f2f2f2"><path d="M474.2 332 L476.4 324 L478.59999999999997 332 Z"/><path d="M479.4 332 L481.59999999999997 324 L483.79999999999995 332 Z"/><path d="M484.59999999999997 332 L486.79999999999995 324 L488.99999999999994 332 Z"/><path d="M489.8 332 L492.0 324 L494.2 332 Z"/><path d="M497.1 332 L499.3 324 L501.5 332 Z"/><path d="M502.3 332 L504.5 324 L506.7 332 Z"/><path d="M507.5 332 L509.7 324 L511.9 332 Z"/><path d="M512.7 332 L514.9000000000001 324 L517.1 332 Z"/><path d="M519.7 332 L521.9000000000001 324 L524.1 332 Z"/><path d="M524.9000000000001 332 L527.1000000000001 324 L529.3000000000001 332 Z"/><path d="M530.1 332 L532.3000000000001 324 L534.5 332 Z"/><path d="M535.3000000000001 332 L537.5000000000001 324 L539.7 332 Z"/><path d="M541.8 332 L544.0 324 L546.1999999999999 332 Z"/><path d="M547.0 332 L549.2 324 L551.4 332 Z"/><path d="M552.1999999999999 332 L554.4 324 L556.5999999999999 332 Z"/><path d="M557.4 332 L559.6 324 L561.8 332 Z"/></g>
<g><path d="M286 309 Q285.5 304 289 303 L301 302.5 Q304.5 305 304 311 Q303 314.5 300.5 314 L288 313.6 Q286 312 286 309 Z" fill="#b0404e"/><path d="M290.6 308.5 Q295 306.5 300.3 307.5 L300 313 Q297 315 292 314.5 Q290.5 312 290.6 308.5 Z" fill="#f0dcd4"/><path d="M289 295.3 L295.5 296.3 L302 297.8 L302.9 299.6 L298 301.5 L285.2 306.6 L284.6 305 L286.6 299.4 Z" fill="#2c2a48"/><path d="M285.8 305 L302.4 298.4" stroke="#c8404a" stroke-width="1.2"/><path d="M289.5 314 L301.5 314 L302.6 324.8 L288.6 324.8 Z" fill="#2b2a44"/><path d="M292 321.2 h5.5 l-0.8 1.6 h-4 z" fill="#d8b860"/><path d="M296 315.5 l2.5 4" stroke="#a83a48" stroke-width="0.9"/><rect x="290.5" y="325" width="2.2" height="2.8" fill="#6a3a2a"/><rect x="298.8" y="325" width="2.2" height="2.8" fill="#6a3a2a"/></g>
<path d="M590.8 225.0 L596.8 227.8 L596.8 233.0 L590.8 235.8 L584.8 233.0 L584.8 227.8 Z" fill="#2fd03a"/><path d="M584.8 233.0 L590.8 235.8 L596.8 233.0 L590.8 230.4 Z" fill="#22a02c"/>
<path d="M618.6 226.1 L624.6 228.9 L624.6 234.1 L618.6 236.9 L612.6 234.1 L612.6 228.9 Z" fill="#5a5ef0"/><path d="M612.6 234.1 L618.6 236.9 L624.6 234.1 L618.6 231.5 Z" fill="#3c3fbf"/>
<path d="M648.2 228.79999999999998 L654.2 231.6 L654.2 236.79999999999998 L648.2 239.6 L642.2 236.79999999999998 L642.2 231.6 Z" fill="#f03038"/><path d="M642.2 236.79999999999998 L648.2 239.6 L654.2 236.79999999999998 L648.2 234.2 Z" fill="#b82028"/>
<path d="M677.5 228.6 L683.5 231.4 L683.5 236.6 L677.5 239.4 L671.5 236.6 L671.5 231.4 Z" fill="#f4f4f4"/><path d="M671.5 236.6 L677.5 239.4 L683.5 236.6 L677.5 234 Z" fill="#bdbdbd"/>
<rect x="573" y="243.8" width="22.6" height="22.6" fill="#2a2a2a"/><rect x="574" y="244.8" width="20.6" height="20.6" fill="#e4e4e4"/><rect x="576" y="246.8" width="16.6" height="16.6" fill="#9a9a9a"/><path d="M576 251.33333333333334 h16.6 M576 258.8666666666667 h16.6 M584.3 246.8 v7.533333333333334 M580.5333333333333 251.33333333333334 v7.533333333333334 M588.0666666666667 258.8666666666667 v4.533333333333334" stroke="#5a5a5a" stroke-width="0.8"/>
<rect x="605.8" y="243.8" width="22.6" height="22.6" fill="#2a2a2a"/><rect x="606.8" y="244.8" width="20.6" height="20.6" fill="#e4e4e4"/><rect x="608.8" y="246.8" width="16.6" height="16.6" fill="#9a9a9a"/><path d="M608.8 251.33333333333334 h16.6 M608.8 258.8666666666667 h16.6 M617.0999999999999 246.8 v7.533333333333334 M613.3333333333333 251.33333333333334 v7.533333333333334 M620.8666666666667 258.8666666666667 v4.533333333333334" stroke="#5a5a5a" stroke-width="0.8"/>
<rect x="638.4" y="243.8" width="22.6" height="22.6" fill="#2a2a2a"/><rect x="639.4" y="244.8" width="20.6" height="20.6" fill="#e4e4e4"/><rect x="641.4" y="246.8" width="16.6" height="16.6" fill="#9a9a9a"/><path d="M641.4 251.33333333333334 h16.6 M641.4 258.8666666666667 h16.6 M649.6999999999999 246.8 v7.533333333333334 M645.9333333333333 251.33333333333334 v7.533333333333334 M653.4666666666667 258.8666666666667 v4.533333333333334" stroke="#5a5a5a" stroke-width="0.8"/>
<rect x="668.4" y="243.8" width="22.6" height="22.6" fill="#2a2a2a"/><rect x="669.4" y="244.8" width="20.6" height="20.6" fill="#e4e4e4"/><rect x="671.4" y="246.8" width="16.6" height="16.6" fill="#9a9a9a"/><path d="M671.4 251.33333333333334 h16.6 M671.4 258.8666666666667 h16.6 M679.6999999999999 246.8 v7.533333333333334 M675.9333333333333 251.33333333333334 v7.533333333333334 M683.4666666666667 258.8666666666667 v4.533333333333334" stroke="#5a5a5a" stroke-width="0.8"/>
<rect x="546.3" y="250.3" width="172.5" height="9.7" rx="4.85" fill="#ee9a50" fill-opacity="0.55"/>
<text x="632" y="258" font-size="8" fill="#6a4a2a" fill-opacity="0.3" text-anchor="middle" textLength="160" lengthAdjust="spacingAndGlyphs">GimmickBlock (1) GimmickBlock (4)</text>
<rect x="686.6" y="316.4" width="23" height="7.6" rx="3.8" fill="#d8a070" fill-opacity="0.75"/>
<text x="698" y="322.4" font-size="6.5" fill="#6a4a2a" fill-opacity="0.45" text-anchor="middle" textLength="15" lengthAdjust="spacingAndGlyphs">gate</text>
<path d="M710.5 314.6 Q716 313 722 312.5 L727 311.2 L737 311.2 L737 328 L733 331 L728 331 L726.5 326 L722 325.5 L711 324.2 Z" fill="#0e0e0e"/>
<path d="M708.6 316.5 Q711 314.5 712.4 316 L712.4 323.5 Q711 325 708.6 323 Z" fill="#d0404c"/>
<rect x="712.4" y="314" width="6" height="3.5" fill="#9a9a9a" fill-opacity="0.8"/><rect x="720" y="312.6" width="1.4" height="11.4" fill="#b8b8b8"/>
<path d="M728 331 L732 322 L735 323 L733 331 Z" fill="#bdbdbd" fill-opacity="0.8"/>
<rect x="242.9" y="345.7" width="82.6" height="33.2" rx="16.6" fill="#000" fill-opacity="0.22" stroke="#ffffff" stroke-width="2.2"/>
<circle cx="284.3" cy="362" r="11.6" fill="#ffffff"/>
<path d="M247.6 362 L254 358 L254 366 Z M321.5 362 L315 358 L315 366 Z" fill="#ffffff"/>
<circle cx="525.3" cy="358.7" r="21.5" fill="#000" fill-opacity="0.22" stroke="#ffffff" stroke-width="2.6"/>
<path d="M525.3 347.8 L538 363.5 L512.6 363.5 Z" fill="#ffffff"/>
<rect x="174.15" y="88.8" width="1" height="363.2" fill="#a0a0a0" fill-opacity="0.15"/><rect x="193.40" y="88.8" width="1" height="363.2" fill="#a0a0a0" fill-opacity="0.08"/><rect x="212.65" y="88.8" width="1" height="363.2" fill="#a0a0a0" fill-opacity="0.27"/><rect x="231.90" y="88.8" width="1" height="363.2" fill="#a0a0a0" fill-opacity="0.08"/><rect x="251.15" y="88.8" width="1" height="363.2" fill="#a0a0a0" fill-opacity="0.15"/><rect x="270.40" y="88.8" width="1" height="363.2" fill="#a0a0a0" fill-opacity="0.08"/><rect x="289.65" y="88.8" width="1" height="363.2" fill="#a0a0a0" fill-opacity="0.15"/><rect x="308.90" y="88.8" width="1" height="363.2" fill="#a0a0a0" fill-opacity="0.08"/><rect x="328.15" y="88.8" width="1" height="363.2" fill="#a0a0a0" fill-opacity="0.15"/><rect x="347.40" y="88.8" width="1" height="363.2" fill="#a0a0a0" fill-opacity="0.08"/><rect x="366.65" y="88.8" width="1" height="363.2" fill="#a0a0a0" fill-opacity="0.15"/><rect x="385.90" y="88.8" width="1" height="363.2" fill="#a0a0a0" fill-opacity="0.08"/><rect x="405.15" y="88.8" width="1" height="363.2" fill="#a0a0a0" fill-opacity="0.27"/><rect x="424.40" y="88.8" width="1" height="363.2" fill="#a0a0a0" fill-opacity="0.08"/><rect x="443.65" y="88.8" width="1" height="363.2" fill="#a0a0a0" fill-opacity="0.15"/><rect x="462.90" y="88.8" width="1" height="363.2" fill="#a0a0a0" fill-opacity="0.08"/><rect x="482.15" y="88.8" width="1" height="363.2" fill="#a0a0a0" fill-opacity="0.15"/><rect x="501.40" y="88.8" width="1" height="363.2" fill="#a0a0a0" fill-opacity="0.08"/><rect x="520.65" y="88.8" width="1" height="363.2" fill="#a0a0a0" fill-opacity="0.15"/><rect x="539.90" y="88.8" width="1" height="363.2" fill="#a0a0a0" fill-opacity="0.08"/><rect x="559.15" y="88.8" width="1" height="363.2" fill="#a0a0a0" fill-opacity="0.15"/><rect x="578.40" y="88.8" width="1" height="363.2" fill="#a0a0a0" fill-opacity="0.08"/><rect x="597.65" y="88.8" width="1" height="363.2" fill="#a0a0a0" fill-opacity="0.5"/><rect x="616.90" y="88.8" width="1" height="363.2" fill="#a0a0a0" fill-opacity="0.08"/><rect x="636.15" y="88.8" width="1" height="363.2" fill="#a0a0a0" fill-opacity="0.15"/><rect x="655.40" y="88.8" width="1" height="363.2" fill="#a0a0a0" fill-opacity="0.08"/><rect x="674.65" y="88.8" width="1" height="363.2" fill="#a0a0a0" fill-opacity="0.15"/><rect x="693.90" y="88.8" width="1" height="363.2" fill="#a0a0a0" fill-opacity="0.08"/><rect x="713.15" y="88.8" width="1" height="363.2" fill="#a0a0a0" fill-opacity="0.15"/><rect x="732.40" y="88.8" width="1" height="363.2" fill="#a0a0a0" fill-opacity="0.08"/><rect x="183" y="88.70" width="554" height="1" fill="#a0a0a0" fill-opacity="0.27"/><rect x="183" y="107.95" width="554" height="1" fill="#a0a0a0" fill-opacity="0.08"/><rect x="183" y="127.20" width="554" height="1" fill="#a0a0a0" fill-opacity="0.15"/><rect x="183" y="146.45" width="554" height="1" fill="#a0a0a0" fill-opacity="0.08"/><rect x="183" y="165.70" width="554" height="1" fill="#a0a0a0" fill-opacity="0.15"/><rect x="183" y="184.95" width="554" height="1" fill="#a0a0a0" fill-opacity="0.08"/><rect x="183" y="204.20" width="554" height="1" fill="#a0a0a0" fill-opacity="0.15"/><rect x="183" y="223.45" width="554" height="1" fill="#a0a0a0" fill-opacity="0.08"/><rect x="183" y="242.70" width="554" height="1" fill="#a0a0a0" fill-opacity="0.15"/><rect x="183" y="261.95" width="554" height="1" fill="#a0a0a0" fill-opacity="0.08"/><rect x="183" y="281.20" width="554" height="1" fill="#a0a0a0" fill-opacity="0.27"/><rect x="183" y="300.45" width="554" height="1" fill="#a0a0a0" fill-opacity="0.08"/><rect x="183" y="319.70" width="554" height="1" fill="#a0a0a0" fill-opacity="0.15"/><rect x="183" y="338.95" width="554" height="1" fill="#a0a0a0" fill-opacity="0.08"/><rect x="183" y="358.20" width="554" height="1" fill="#a0a0a0" fill-opacity="0.15"/><rect x="183" y="377.45" width="554" height="1" fill="#a0a0a0" fill-opacity="0.08"/><rect x="183" y="396.70" width="554" height="1" fill="#a0a0a0" fill-opacity="0.15"/><rect x="183" y="415.95" width="554" height="1" fill="#a0a0a0" fill-opacity="0.08"/><rect x="183" y="435.20" width="554" height="1" fill="#a0a0a0" fill-opacity="0.15"/>
</g>
<rect x="184.7" y="90.7" width="27.8" height="110.3" rx="3" fill="#161616"/>
<path d="M192.5 96 h12.5 M192.5 98.2 h12.5" stroke="#9a9a9a" stroke-width="0.8"/>
<rect x="187" y="104.3" width="23.8" height="14.6" rx="1.5" fill="#505050"/>
<rect x="187" y="119.6" width="23.8" height="14.6" rx="1.5" fill="#505050"/>
<rect x="187" y="135.7" width="23.8" height="14.6" rx="1.5" fill="#505050"/>
<rect x="187" y="151.5" width="23.8" height="14.6" rx="1.5" fill="#505050"/>
<rect x="187" y="167.7" width="23.8" height="14.6" rx="1.5" fill="#46658f"/>
<rect x="187" y="184" width="23.8" height="14.6" rx="1.5" fill="#505050"/>
<g fill="#e8e8e8"><rect x="195.2" y="107.6" width="1.7" height="6" rx="0.85"/><rect x="197.3" y="106.4" width="1.7" height="6" rx="0.85"/><rect x="199.4" y="106.8" width="1.7" height="6" rx="0.85"/><rect x="201.5" y="108" width="1.7" height="5" rx="0.85"/><path d="M195.2 111.5 h8 v1.8 q0 3.6 -3.8 3.6 h-0.8 q-2.4 0 -3.4 -2.2 l-1.8 -3 q-0.4 -1 0.6 -1.2 l1.2 0.8 z"/></g>
<path d="M198.9 121.6 v11 M193.4 127.1 h11" stroke="#b0b0b0" stroke-width="0.9" stroke-dasharray="1.2 1"/><path d="M198.9 120.6 l-2 2.4 h4z M198.9 133.6 l-2 -2.4 h4z M192.4 127.1 l2.4 -2 v4z M205.4 127.1 l-2.4 -2 v4z" fill="#c0c0c0"/>
<path d="M202.5 138.6 a4.6 4.6 0 0 0 -7.6 4 M195.3 146.5 a4.6 4.6 0 0 0 7.6 -4" fill="none" stroke="#aaa" stroke-width="1"/><path d="M201 137 l3 1.2 l-2 2.4z M196.8 148.1 l-3 -1.2 l2 -2.4z" fill="#aaa"/>
<rect x="194.2" y="154" width="9.4" height="9.4" fill="none" stroke="#b0b0b0" stroke-width="0.9"/><rect x="194.2" y="159.8" width="3.6" height="3.6" fill="none" stroke="#b0b0b0" stroke-width="0.9"/><path d="M198.5 159 l4 -4 M200.5 155 h2 v2" fill="none" stroke="#b0b0b0" stroke-width="0.9"/>
<rect x="194.4" y="170.4" width="9" height="9" fill="none" stroke="#e8e8e8" stroke-width="0.8" stroke-dasharray="1.5 1"/><circle cx="194.4" cy="170.4" r="1.1" fill="#e8e8e8"/><circle cx="194.4" cy="179.4" r="1.1" fill="#e8e8e8"/><circle cx="203.4" cy="170.4" r="1.1" fill="#e8e8e8"/><circle cx="203.4" cy="179.4" r="1.1" fill="#e8e8e8"/>
<circle cx="198.9" cy="191.3" r="4.2" fill="none" stroke="#9a9a9a" stroke-width="0.9" stroke-dasharray="1.2 0.8"/><path d="M198.9 186 v10.6 M193.6 191.3 h10.6" stroke="#9a9a9a" stroke-width="0.8"/>
<rect x="0" y="452" width="737" height="2" fill="#191919" />
<rect x="0" y="454" width="737" height="13.4" fill="#282828" />
<rect x="0" y="454" width="59" height="13.4" fill="#3c3c3c" />
<text x="17" y="465" font-size="9.4" fill="#c4c4c4" textLength="30" lengthAdjust="spacingAndGlyphs" >Project</text>
<text x="79" y="465" font-size="9.4" fill="#c4c4c4" textLength="34" lengthAdjust="spacingAndGlyphs" >Console</text>
<rect x="0" y="467.4" width="737" height="16" fill="#3c3c3c" />
<path d="M390 470.7 H613.5 V481.5 H390 a3 3 0 0 1 -3 -3 V473.7 a3 3 0 0 1 3 -3 Z" fill="#2a2a2a" stroke="#202020" stroke-width="0.8"/>
<rect x="0" y="483.4" width="156" height="243.3" fill="#383838" />
<rect x="156" y="483.4" width="581" height="243.3" fill="#333333" />
<rect x="156" y="483.4" width="581" height="16.3" fill="#3c3c3c" />
<rect x="156" y="710.8" width="581" height="16" fill="#3f3f3f" />
<rect x="155.5" y="483.4" width="1" height="243.3" fill="#2a2a2a" />
<rect x="0" y="616.3" width="155.5" height="12" fill="#4a4a4a" />
<path d="M710.8 460.0 h6 v3.6 h-6 z M711.8 460.0 v-1.8 a2 2 0 0 1 4 0" fill="none" stroke="#c8c8c8" stroke-width="0.9"/>
<rect x="726.5" y="457.0" width="1.3" height="1.3" fill="#c8c8c8" />
<rect x="726.5" y="459.6" width="1.3" height="1.3" fill="#c8c8c8" />
<rect x="726.5" y="462.2" width="1.3" height="1.3" fill="#c8c8c8" />
<path d="M5 459.5 h3.5 l1 1 h5.5 v5.5 h-10 z" fill="#c8c8c8"/>
<rect x="67.5" y="458.3" width="7.5" height="8" fill="none" stroke="#c8c8c8" stroke-width="0.9"/><path d="M69 460.6 h4.5 M69 462.4 h4.5 M69 464.2 h4.5" stroke="#c8c8c8" stroke-width="0.7"/>
<path d="M4.5 475.5 h9.6 M9.3 470.7 v9.6" stroke="#d0d0d0" stroke-width="1.6"/><path d="M17.2 474 h5.4 l-2.7 3.5 z" fill="#c8c8c8"/>
<circle cx="393.6" cy="475.2" r="1.6" fill="none" stroke="#b0b0b0" stroke-width="0.9"/><path d="M394.8 476.4 l1.5 1.5" stroke="#b0b0b0" stroke-width="1"/>
<rect x="616.5" y="471.8" width="8" height="7.5" fill="none" stroke="#c8c8c8" stroke-width="0.9"/><circle cx="617.5" cy="478.4" r="1.6" fill="#3c3c3c" stroke="#c8c8c8" stroke-width="0.8"/><path d="M619.5 476.2 l3-3 m-2 0 h2 v2" fill="none" stroke="#c8c8c8" stroke-width="0.8"/>
<rect x="628.6" y="468" width="0.8" height="15" fill="#2c2c2c" />
<rect x="648.7" y="468" width="0.8" height="15" fill="#2c2c2c" />
<rect x="667.7" y="468" width="0.8" height="15" fill="#2c2c2c" />
<rect x="687.6" y="468" width="0.8" height="15" fill="#2c2c2c" />
<rect x="707.3" y="468" width="0.8" height="15" fill="#2c2c2c" />
<circle cx="635" cy="478" r="2.6" fill="#c8c8c8"/><rect x="634" y="471" width="4" height="4" fill="#c8c8c8"/><path d="M638.5 479.5 l2 -4 l2 4 z" fill="#c8c8c8"/>
<path d="M653.5 477 l4 -4 h3.5 v3.5 l-4 4 z" fill="#c8c8c8"/><circle cx="659" cy="474.6" r="0.7" fill="#3c3c3c"/>
<circle cx="676.6" cy="475.5" r="4.6" fill="#d8d8d8"/><rect x="676" y="472.6" width="1.3" height="3.8" fill="#3c3c3c"/><rect x="676" y="477.3" width="1.3" height="1.2" fill="#3c3c3c"/>
<path d="M696.7 471 l1.3 2.8 l3 0.3 l-2.3 2 l0.7 3 l-2.7 -1.6 l-2.7 1.6 l0.7 -3 l-2.3 -2 l3 -0.3 z" fill="#8a8a8a"/>
<path d="M710.5 475.5 q5 -4.5 10 0 q-5 4.5 -10 0 z" fill="none" stroke="#c8c8c8" stroke-width="0.9"/><circle cx="715.5" cy="475.5" r="1.4" fill="#c8c8c8"/><path d="M711 479.8 l9 -8.6" stroke="#c8c8c8" stroke-width="0.9"/>
<text x="723.6" y="479.2" font-size="9.4" fill="#c8c8c8" textLength="8" lengthAdjust="spacingAndGlyphs" >21</text>
<path d="M2.4 488.4 h6 l-3 3.8 z" fill="#8a8a8a"/>
<path d="M17.3 486 l1.1 2.5 l2.7 0.3 l-2 1.8 l0.6 2.7 l-2.4 -1.4 l-2.4 1.4 l0.6 -2.7 l-2 -1.8 l2.7 -0.3 z" fill="#d0d0d0"/>
<text x="25.4" y="493" font-size="9.4" fill="#d0d0d0" textLength="41.2" lengthAdjust="spacingAndGlyphs" font-weight="bold" >Favorites</text>
<circle cx="27.1" cy="501.3" r="2.8" fill="none" stroke="#c8c8c8" stroke-width="0.9"/><path d="M29.1 503.3 l2.6 2.6" stroke="#c8c8c8" stroke-width="1.1"/>
<text x="35.8" y="505.0" font-size="9.4" fill="#c4c4c4" textLength="51.9" lengthAdjust="spacingAndGlyphs" >All Materials</text>
<circle cx="27.1" cy="513.35" r="2.8" fill="none" stroke="#c8c8c8" stroke-width="0.9"/><path d="M29.1 515.35 l2.6 2.6" stroke="#c8c8c8" stroke-width="1.1"/>
<text x="35.8" y="517.0500000000001" font-size="9.4" fill="#c4c4c4" textLength="43.6" lengthAdjust="spacingAndGlyphs" >All Models</text>
<circle cx="27.1" cy="525.4" r="2.8" fill="none" stroke="#c8c8c8" stroke-width="0.9"/><path d="M29.1 527.4 l2.6 2.6" stroke="#c8c8c8" stroke-width="1.1"/>
<text x="35.8" y="529.1" font-size="9.4" fill="#c4c4c4" textLength="45.3" lengthAdjust="spacingAndGlyphs" >All Prefabs</text>
<path d="M2.4 548.4000000000001 h6 l-3 3.8 z" fill="#8a8a8a"/>
<path d="M12.8 546.6 h3.6 l1 1 h5 v1.4 h-7.6 l-2 5 z M14.4 549.2 h9 l-2 5 h-9 z" fill="#d0d0d0"/>
<text x="25.4" y="553" font-size="9.4" fill="#d0d0d0" textLength="31.5" lengthAdjust="spacingAndGlyphs" font-weight="bold" >Assets</text>
<path d="M23.5 558.5 h3.8 l1 1.1 h4.7 v6.5 h-9.5 z" fill="#d0d0d0"/>
<text x="35.8" y="565.0" font-size="9.4" fill="#c4c4c4" textLength="27.6" lengthAdjust="spacingAndGlyphs" >Enemy</text>
<path d="M23.5 570.55 h3.8 l1 1.1 h4.7 v6.5 h-9.5 z" fill="#d0d0d0"/>
<text x="35.8" y="577.05" font-size="9.4" fill="#c4c4c4" textLength="29.6" lengthAdjust="spacingAndGlyphs" >Images</text>
<path d="M23.5 582.6 h3.8 l1 1.1 h4.7 v6.5 h-9.5 z" fill="#d0d0d0"/>
<text x="35.8" y="589.1" font-size="9.4" fill="#c4c4c4" textLength="26.7" lengthAdjust="spacingAndGlyphs" >Player</text>
<path d="M23.5 594.65 h3.8 l1 1.1 h4.7 v6.5 h-9.5 z" fill="#d0d0d0"/>
<text x="35.8" y="601.15" font-size="9.4" fill="#c4c4c4" textLength="32" lengthAdjust="spacingAndGlyphs" >Prefabs</text>
<path d="M23.5 606.7 h3.8 l1 1.1 h4.7 v6.5 h-9.5 z" fill="#d0d0d0"/>
<text x="35.8" y="613.2" font-size="9.4" fill="#c4c4c4" textLength="31.5" lengthAdjust="spacingAndGlyphs" >Scenes</text>
<path d="M23.5 618.75 h3.8 l1 1.1 h4.7 v6.5 h-9.5 z" fill="#d0d0d0"/>
<text x="35.8" y="625.25" font-size="9.4" fill="#c4c4c4" textLength="29.1" lengthAdjust="spacingAndGlyphs" >Scripts</text>
<path d="M23.5 630.8 h3.8 l1 1.1 h4.7 v6.5 h-9.5 z" fill="#d0d0d0"/>
<text x="35.8" y="637.3" font-size="9.4" fill="#c4c4c4" textLength="31.2" lengthAdjust="spacingAndGlyphs" >Sounds</text>
<path d="M3.2 643.6 v6 l3.8 -3 z" fill="#8a8a8a"/>
<path d="M12.8 642.8000000000001 h3.8 l1 1.1 h4.7 v6.5 h-9.5 z" fill="#d0d0d0"/>
<text x="25.4" y="649.4" font-size="9.4" fill="#d0d0d0" textLength="43.6" lengthAdjust="spacingAndGlyphs" font-weight="bold" >Packages</text>
<text x="159.7" y="495" font-size="9.4" fill="#b4b4b4" textLength="27.3" lengthAdjust="spacingAndGlyphs" >Assets</text>
<path d="M193 488.6 l3 3 l-3 3" fill="none" stroke="#9a9a9a" stroke-width="0.9"/>
<text x="201" y="495" font-size="9.4" fill="#d0d0d0" textLength="32" lengthAdjust="spacingAndGlyphs" font-weight="bold" >Scripts</text>
<path d="M178.70000000000002 510.4 h25.7 l8.5 8.6 v32.1 a2 2 0 0 1 -2 2 h-32.2 a2 2 0 0 1 -2 -2 v-38.7 a2 2 0 0 1 2 -2 z" fill="#ebebeb"/>
<path d="M192.00000000000003 519.9 L189.10000000000002 545.6 M199.4 519.9 L196.60000000000002 545.6 M184.8 527.0 H204.4 M183.4 536.6 H203.10000000000002" stroke="#237223" stroke-width="3.6"/>
<text x="194.8" y="564.6" font-size="7.6" fill="#c4c4c4" text-anchor="middle" textLength="45.8" lengthAdjust="spacingAndGlyphs" >CameraCo...</text>
<path d="M241.45000000000002 510.4 h25.7 l8.5 8.6 v32.1 a2 2 0 0 1 -2 2 h-32.2 a2 2 0 0 1 -2 -2 v-38.7 a2 2 0 0 1 2 -2 z" fill="#ebebeb"/>
<path d="M254.75000000000003 519.9 L251.85000000000002 545.6 M262.15000000000003 519.9 L259.35 545.6 M247.55 527.0 H267.15000000000003 M246.15 536.6 H265.85" stroke="#237223" stroke-width="3.6"/>
<text x="257.55" y="564.6" font-size="7.6" fill="#c4c4c4" text-anchor="middle" textLength="44.5" lengthAdjust="spacingAndGlyphs" >CannonCo...</text>
<path d="M304.2 510.4 h25.7 l8.5 8.6 v32.1 a2 2 0 0 1 -2 2 h-32.2 a2 2 0 0 1 -2 -2 v-38.7 a2 2 0 0 1 2 -2 z" fill="#ebebeb"/>
<path d="M317.5 519.9 L314.59999999999997 545.6 M324.9 519.9 L322.09999999999997 545.6 M310.3 527.0 H329.9 M308.9 536.6 H328.59999999999997" stroke="#237223" stroke-width="3.6"/>
<text x="320.3" y="564.6" font-size="7.6" fill="#c4c4c4" text-anchor="middle" textLength="44" lengthAdjust="spacingAndGlyphs" >ChangeSc...</text>
<path d="M366.95 510.4 h25.7 l8.5 8.6 v32.1 a2 2 0 0 1 -2 2 h-32.2 a2 2 0 0 1 -2 -2 v-38.7 a2 2 0 0 1 2 -2 z" fill="#ebebeb"/>
<path d="M380.25 519.9 L377.34999999999997 545.6 M387.65 519.9 L384.84999999999997 545.6 M373.05 527.0 H392.65 M371.65 536.6 H391.34999999999997" stroke="#237223" stroke-width="3.6"/>
<text x="383.05" y="564.6" font-size="7.6" fill="#c4c4c4" text-anchor="middle" textLength="45.8" lengthAdjust="spacingAndGlyphs" >EnemyCon...</text>
<path d="M429.7 510.4 h25.7 l8.5 8.6 v32.1 a2 2 0 0 1 -2 2 h-32.2 a2 2 0 0 1 -2 -2 v-38.7 a2 2 0 0 1 2 -2 z" fill="#ebebeb"/>
<path d="M443.0 519.9 L440.09999999999997 545.6 M450.4 519.9 L447.59999999999997 545.6 M435.8 527.0 H455.4 M434.4 536.6 H454.09999999999997" stroke="#237223" stroke-width="3.6"/>
<text x="445.8" y="564.6" font-size="7.6" fill="#c4c4c4" text-anchor="middle" textLength="43.9" lengthAdjust="spacingAndGlyphs" >GameMan...</text>
<path d="M492.45 510.4 h25.7 l8.5 8.6 v32.1 a2 2 0 0 1 -2 2 h-32.2 a2 2 0 0 1 -2 -2 v-38.7 a2 2 0 0 1 2 -2 z" fill="#ebebeb"/>
<path d="M505.75 519.9 L502.84999999999997 545.6 M513.15 519.9 L510.34999999999997 545.6 M498.55 527.0 H518.15 M497.15 536.6 H516.85" stroke="#237223" stroke-width="3.6"/>
<text x="508.55" y="564.6" font-size="7.6" fill="#c4c4c4" text-anchor="middle" textLength="45.2" lengthAdjust="spacingAndGlyphs" >GimmickBl...</text>
<path d="M555.1999999999999 510.4 h25.7 l8.5 8.6 v32.1 a2 2 0 0 1 -2 2 h-32.2 a2 2 0 0 1 -2 -2 v-38.7 a2 2 0 0 1 2 -2 z" fill="#ebebeb"/>
<path d="M568.4999999999999 519.9 L565.5999999999999 545.6 M575.9 519.9 L573.0999999999999 545.6 M561.3 527.0 H580.9 M559.9 536.6 H579.5999999999999" stroke="#237223" stroke-width="3.6"/>
<text x="571.3" y="564.6" font-size="7.6" fill="#c4c4c4" text-anchor="middle" textLength="34.2" lengthAdjust="spacingAndGlyphs" >ItemData</text>
<path d="M617.9499999999999 510.4 h25.7 l8.5 8.6 v32.1 a2 2 0 0 1 -2 2 h-32.2 a2 2 0 0 1 -2 -2 v-38.7 a2 2 0 0 1 2 -2 z" fill="#ebebeb"/>
<path d="M631.2499999999999 519.9 L628.3499999999999 545.6 M638.65 519.9 L635.8499999999999 545.6 M624.05 527.0 H643.65 M622.65 536.6 H642.3499999999999" stroke="#237223" stroke-width="3.6"/>
<text x="634.05" y="564.6" font-size="7.6" fill="#c4c4c4" text-anchor="middle" textLength="45.2" lengthAdjust="spacingAndGlyphs" >MovingBlo...</text>
<path d="M680.6999999999999 510.4 h25.7 l8.5 8.6 v32.1 a2 2 0 0 1 -2 2 h-32.2 a2 2 0 0 1 -2 -2 v-38.7 a2 2 0 0 1 2 -2 z" fill="#ebebeb"/>
<path d="M693.9999999999999 519.9 L691.0999999999999 545.6 M701.4 519.9 L698.5999999999999 545.6 M686.8 527.0 H706.4 M685.4 536.6 H705.0999999999999" stroke="#237223" stroke-width="3.6"/>
<text x="696.8" y="564.6" font-size="7.6" fill="#c4c4c4" text-anchor="middle" textLength="47.2" lengthAdjust="spacingAndGlyphs" >PlayerCont...</text>
<path d="M178.70000000000002 580.9 h25.7 l8.5 8.6 v32.1 a2 2 0 0 1 -2 2 h-32.2 a2 2 0 0 1 -2 -2 v-38.7 a2 2 0 0 1 2 -2 z" fill="#ebebeb"/>
<path d="M192.00000000000003 590.4 L189.10000000000002 616.1 M199.4 590.4 L196.60000000000002 616.1 M184.8 597.5 H204.4 M183.4 607.1 H203.10000000000002" stroke="#237223" stroke-width="3.6"/>
<text x="194.8" y="634.7" font-size="7.6" fill="#c4c4c4" text-anchor="middle" textLength="44.6" lengthAdjust="spacingAndGlyphs" >ResultMan...</text>
<path d="M241.45000000000002 580.9 h25.7 l8.5 8.6 v32.1 a2 2 0 0 1 -2 2 h-32.2 a2 2 0 0 1 -2 -2 v-38.7 a2 2 0 0 1 2 -2 z" fill="#ebebeb"/>
<path d="M254.75000000000003 590.4 L251.85000000000002 616.1 M262.15000000000003 590.4 L259.35 616.1 M247.55 597.5 H267.15000000000003 M246.15 607.1 H265.85" stroke="#237223" stroke-width="3.6"/>
<text x="257.55" y="634.7" font-size="7.6" fill="#c4c4c4" text-anchor="middle" textLength="48.8" lengthAdjust="spacingAndGlyphs" >ShellContro...</text>
<path d="M304.2 580.9 h25.7 l8.5 8.6 v32.1 a2 2 0 0 1 -2 2 h-32.2 a2 2 0 0 1 -2 -2 v-38.7 a2 2 0 0 1 2 -2 z" fill="#ebebeb"/>
<path d="M317.5 590.4 L314.59999999999997 616.1 M324.9 590.4 L322.09999999999997 616.1 M310.3 597.5 H329.9 M308.9 607.1 H328.59999999999997" stroke="#237223" stroke-width="3.6"/>
<text x="320.3" y="634.7" font-size="7.6" fill="#c4c4c4" text-anchor="middle" textLength="44.6" lengthAdjust="spacingAndGlyphs" >SwitchActi...</text>
<path d="M366.95 580.9 h25.7 l8.5 8.6 v32.1 a2 2 0 0 1 -2 2 h-32.2 a2 2 0 0 1 -2 -2 v-38.7 a2 2 0 0 1 2 -2 z" fill="#ebebeb"/>
<path d="M380.25 590.4 L377.34999999999997 616.1 M387.65 590.4 L384.84999999999997 616.1 M373.05 597.5 H392.65 M371.65 607.1 H391.34999999999997" stroke="#237223" stroke-width="3.6"/>
<text x="383.05" y="634.7" font-size="7.6" fill="#c4c4c4" text-anchor="middle" textLength="45" lengthAdjust="spacingAndGlyphs" >TimeContro...</text>
<path d="M429.7 580.9 h25.7 l8.5 8.6 v32.1 a2 2 0 0 1 -2 2 h-32.2 a2 2 0 0 1 -2 -2 v-38.7 a2 2 0 0 1 2 -2 z" fill="#ebebeb"/>
<path d="M443.0 590.4 L440.09999999999997 616.1 M450.4 590.4 L447.59999999999997 616.1 M435.8 597.5 H455.4 M434.4 607.1 H454.09999999999997" stroke="#237223" stroke-width="3.6"/>
<text x="445.8" y="634.7" font-size="7.6" fill="#c4c4c4" text-anchor="middle" textLength="37.4" lengthAdjust="spacingAndGlyphs" >VirtualPad</text>
<rect x="683" y="718" width="41" height="1" fill="#6a6a6a" />
<circle cx="707.5" cy="718.5" r="3.2" fill="#c8c8c8"/>
<rect x="0" y="726.7" width="965" height="15.6" fill="#1b1b1b" />
<rect x="965" y="726.7" width="1" height="15.6" fill="#0c0c0c" />
<rect x="0" y="742.3" width="966" height="1.7" fill="#f0f0f0" />
<g fill="#c4c4c4"><ellipse cx="896.7" cy="736.3" rx="3.6" ry="4.4"/><rect x="891.8" y="733" width="9.8" height="0.9"/><rect x="891.8" y="736" width="9.8" height="0.9"/><rect x="891.8" y="739" width="9.8" height="0.9"/></g><path d="M892 731 l9.8 9.8" stroke="#1b1b1b" stroke-width="1.6"/><path d="M892 731 l9.8 9.8" stroke="#c4c4c4" stroke-width="0.8"/>
<g fill="#c4c4c4"><ellipse cx="916" cy="732.6" rx="5" ry="1.8"/><path d="M911 733.5 v2.5 a5 1.8 0 0 0 10 0 v-2.5 a5 1.8 0 0 1 -10 0z M911 737 v2.5 a5 1.8 0 0 0 10 0 v-2.5 a5 1.8 0 0 1 -10 0z"/></g><path d="M911.5 731 l9.5 9.8" stroke="#1b1b1b" stroke-width="1.2"/>
<path d="M931.5 735 a4.5 4.5 0 0 1 8 -2.5 M940.5 737 a4.5 4.5 0 0 1 -8 2.5" fill="none" stroke="#c4c4c4" stroke-width="1"/><circle cx="935.8" cy="736" r="2" fill="#c4c4c4"/><path d="M931 731 l10 10" stroke="#c4c4c4" stroke-width="0.8"/>
<circle cx="955.5" cy="736" r="4.6" fill="none" stroke="#c4c4c4" stroke-width="0.9"/><path d="M953.2 736.2 l1.6 1.6 l3.2 -3.2" fill="none" stroke="#c4c4c4" stroke-width="1"/>
</svg></body></html>
